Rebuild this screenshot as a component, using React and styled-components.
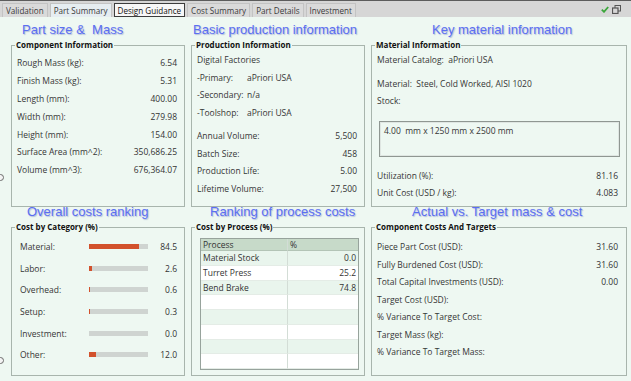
import styled, { createGlobalStyle } from 'styled-components';

const GlobalStyle = createGlobalStyle`
  body {
    margin: 0;
    background: #eef8f2;
    font-family: "Open Sans", "Noto Sans", sans-serif;
  }
`;

const Page = styled.div`
  position: relative;
  width: 631px;
  height: 381px;
  overflow: hidden;
  background: #eef8f2;
  color: #363636;
`;

const TabBar = styled.div`
  height: 17px;
  box-sizing: border-box;
  display: flex;
  align-items: flex-end;
  gap: 2px;
  padding-left: 2px;
  padding-right: 10px;
  background: #d6d6d6;
  border-top: 1px solid #5c5c5c;
`;

const Tab = styled.div`
  height: 14px;
  box-sizing: border-box;
  display: flex;
  align-items: center;
  padding: 0 3px;
  font-size: 8.1px;
  color: ${p => (p.$active ? '#111' : '#3a3a3a')};
  background: ${p => (p.$active ? '#f7f7f7' : p.$hover ? '#e6edf1' : '#dadada')};
  border: 1px solid ${p => (p.$active ? '#3c3c3c' : '#c3c3c3')};
  border-bottom: ${p => (p.$active ? '1px solid #3c3c3c' : 'none')};
  white-space: nowrap;
`;

const BarIcons = styled.div`
  margin-left: auto;
  align-self: center;
  display: flex;
  align-items: center;
  gap: 3px;
`;

const Content = styled.div`
  display: grid;
  grid-template-columns: 174px 174px 256px;
  grid-template-rows: 28px 162px 20px 149px;
  column-gap: 6px;
  padding-left: 11px;
`;

const Note = styled.div`
  align-self: end;
  margin-bottom: 7px;
  padding-left: ${p => p.$indent}px;
  font-family: "Liberation Sans", Arial, sans-serif;
  font-size: 13px;
  line-height: 16px;
  color: #5b6ef2;
  text-shadow: 1px 1px 1px rgba(70, 80, 170, 0.35);
  white-space: nowrap;
`;

const Panel = styled.div`
  position: relative;
  border: 1px solid #a8b5ad;
  padding: ${p => p.$pad};
  display: flex;
  flex-direction: column;
`;

const Legend = styled.div`
  position: absolute;
  top: -7px;
  left: 3px;
  padding: 0 1px;
  background: #eef8f2;
  font-size: 8px;
  font-weight: 700;
  line-height: 12px;
  color: #111;
  white-space: nowrap;
`;

const Row = styled.div`
  height: ${p => p.$h}px;
  margin-top: ${p => p.$gap || 0}px;
  display: flex;
  align-items: center;
  justify-content: ${p => (p.$start ? 'flex-start' : 'space-between')};
  font-size: 8.5px;
  white-space: nowrap;
`;

const SubLabel = styled.span`
  width: 50px;
`;

const Value = styled.span`
  color: #333;
`;

const StockBox = styled.div`
  height: 36px;
  box-sizing: border-box;
  margin: 11px -2px 0 2px;
  padding: 3px 4px;
  border: 1px solid #8f9792;
  box-shadow: inset 0 0 0 1px #dfe6e2;
  font-size: 8.5px;
`;

const BarRow = styled.div`
  height: 21.6px;
  display: grid;
  grid-template-columns: 69px 59px 1fr;
  align-items: center;
  font-size: 8.5px;
`;

const Track = styled.div`
  height: 5px;
  background: #cfd4d1;
`;

const Fill = styled.div`
  height: 100%;
  background: #d2512c;
`;

const Num = styled.span`
  text-align: right;
  color: #333;
`;

const Table = styled.div`
  height: 132px;
  box-sizing: border-box;
  border: 1px solid #97a39c;
  background: #fff;
  display: grid;
  grid-template-columns: 87px 1fr;
  grid-template-rows: 12px repeat(8, 1fr);
  font-size: 8.5px;
`;

const Cell = styled.div`
  display: flex;
  align-items: center;
  justify-content: ${p => (p.$num ? 'flex-end' : 'flex-start')};
  padding: 0 2px;
  background: ${p => (p.$head ? '#c7dac9' : p.$alt ? '#e9f5ed' : '#ffffff')};
  border-right: ${p => (p.$first ? '1px solid #d3ddd6' : 'none')};
  border-bottom: 1px solid ${p => (p.$head ? '#b3c4b6' : '#e4ece6')};
  color: #333;
  white-space: nowrap;
`;

const Handle = styled.div`
  position: absolute;
  left: -3px;
  top: ${p => p.$top}px;
  width: 5px;
  height: 5px;
  border: 1px solid #6b6b6b;
  border-radius: 50%;
  background: #f4f4f4;
`;

const tabs = ['Validation', 'Part Summary', 'Design Guidance', 'Cost Summary', 'Part Details', 'Investment'];

const component = [
  ['Rough Mass (kg):', '6.54'],
  ['Finish Mass (kg):', '5.31'],
  ['Length (mm):', '400.00'],
  ['Width (mm):', '279.98'],
  ['Height (mm):', '154.00'],
  ['Surface Area (mm^2):', '350,686.25'],
  ['Volume (mm^3):', '676,364.07'],
];

const factories = [
  ['-Primary:', 'aPriori USA'],
  ['-Secondary:', 'n/a'],
  ['-Toolshop:', 'aPriori USA'],
];

const production = [
  ['Annual Volume:', '5,500'],
  ['Batch Size:', '458'],
  ['Production Life:', '5.00'],
  ['Lifetime Volume:', '27,500'],
];

const categories = [
  ['Material:', 84.5],
  ['Labor:', 2.6],
  ['Overhead:', 0.6],
  ['Setup:', 0.3],
  ['Investment:', 0.0],
  ['Other:', 12.0],
];

const processes = [
  ['Material Stock', '0.0'],
  ['Turret Press', '25.2'],
  ['Bend Brake', '74.8'],
  ['', ''],
  ['', ''],
  ['', ''],
  ['', ''],
  ['', ''],
];

const targets = [
  ['Piece Part Cost (USD):', '31.60'],
  ['Fully Burdened Cost (USD):', '31.60'],
  ['Total Capital Investments (USD):', '0.00'],
  ['Target Cost (USD):', ''],
  ['% Variance To Target Cost:', ''],
  ['Target Mass (kg):', ''],
  ['% Variance To Target Mass:', ''],
];

const barWidth = pct => {
  if (pct <= 0) return 0;
  if (pct < 1) return 1;
  return Math.max(2.5, (pct / 100) * 59);
};

export default function App() {
  return (
    <Page>
      <GlobalStyle />
      <TabBar>
        {tabs.map(t => (
          <Tab key={t} $active={t === 'Design Guidance'} $hover={t === 'Part Summary'}>
            {t}
          </Tab>
        ))}
        <BarIcons>
          <svg width="8" height="7" viewBox="0 0 8 7">
            <path d="M0.8 3.6 L3 5.8 L7.2 1" fill="none" stroke="#3aa63a" strokeWidth="1.8" />
          </svg>
          <svg width="9" height="9" viewBox="0 0 9 9">
            <rect x="3" y="0.5" width="5.5" height="5.5" fill="none" stroke="#555" strokeWidth="1" />
            <rect x="0.5" y="3" width="5.5" height="5.5" fill="#d6d6d6" stroke="#555" strokeWidth="1.2" />
          </svg>
        </BarIcons>
      </TabBar>

      <Content>
        <Note $indent={11}>Part size &amp;&nbsp; Mass</Note>
        <Note $indent={2}>Basic production information</Note>
        <Note $indent={61}>Key material information</Note>

        <Panel $pad="8px 7px 0 5px">
          <Legend>Component Information</Legend>
          {component.map(([l, v]) => (
            <Row key={l} $h={17.8}>
              <span>{l}</span>
              <Value>{v}</Value>
            </Row>
          ))}
        </Panel>

        <Panel $pad="5px 7px 0 5px">
          <Legend>Production Information</Legend>
          <Row $h={17.5} $start>
            <span>Digital Factories</span>
          </Row>
          {factories.map(([l, v]) => (
            <Row key={l} $h={17.5} $start>
              <SubLabel>{l}</SubLabel>
              <span>{v}</span>
            </Row>
          ))}
          {production.map(([l, v], i) => (
            <Row key={l} $h={17.6} $gap={i === 0 ? 6 : 0}>
              <span>{l}</span>
              <Value>{v}</Value>
            </Row>
          ))}
        </Panel>

        <Panel $pad="5px 8px 0 5px">
          <Legend>Material Information</Legend>
          <Row $h={17.5} $start>
            <span>Material Catalog:&nbsp; aPriori USA</span>
          </Row>
          <Row $h={17.5} $gap={6} $start>
            <span>Material:&nbsp; Steel, Cold Worked, AISI 1020</span>
          </Row>
          <Row $h={17.5} $start>
            <span>Stock:</span>
          </Row>
          <StockBox>4.00&nbsp; mm x 1250 mm x 2500 mm</StockBox>
          <Row $h={17.5} $gap={10}>
            <span>Utilization (%):</span>
            <Value>81.16</Value>
          </Row>
          <Row $h={17.5}>
            <span>Unit Cost (USD / kg):</span>
            <Value>4.083</Value>
          </Row>
        </Panel>

        <Note $indent={16}>Overall costs ranking</Note>
        <Note $indent={19}>Ranking of process costs</Note>
        <Note $indent={41}>Actual vs. Target mass &amp; cost</Note>

        <Panel $pad="8px 7px 0 8px">
          <Legend>Cost by Category (%)</Legend>
          {categories.map(([l, pct]) => (
            <BarRow key={l}>
              <span>{l}</span>
              <Track>
                <Fill style={{ width: `${barWidth(pct)}px` }} />
              </Track>
              <Num>{pct.toFixed(1)}</Num>
            </BarRow>
          ))}
        </Panel>

        <Panel $pad="10px 5px 0 8px">
          <Legend>Cost by Process (%)</Legend>
          <Table>
            <Cell $head $first>Process</Cell>
            <Cell $head>%</Cell>
            {processes.map(([p, v], i) => [
              <Cell key={`p${i}`} $first $alt={i % 2 === 0}>{p}</Cell>,
              <Cell key={`v${i}`} $num $alt={i % 2 === 0}>{v}</Cell>,
            ])}
          </Table>
        </Panel>

        <Panel $pad="10px 8px 0 5px">
          <Legend>Component Costs And Targets</Legend>
          {targets.map(([l, v]) => (
            <Row key={l} $h={17.5}>
              <span>{l}</span>
              <Value>{v}</Value>
            </Row>
          ))}
        </Panel>
      </Content>

      <Handle $top={174} />
      <Handle $top={357} />
    </Page>
  );
}
